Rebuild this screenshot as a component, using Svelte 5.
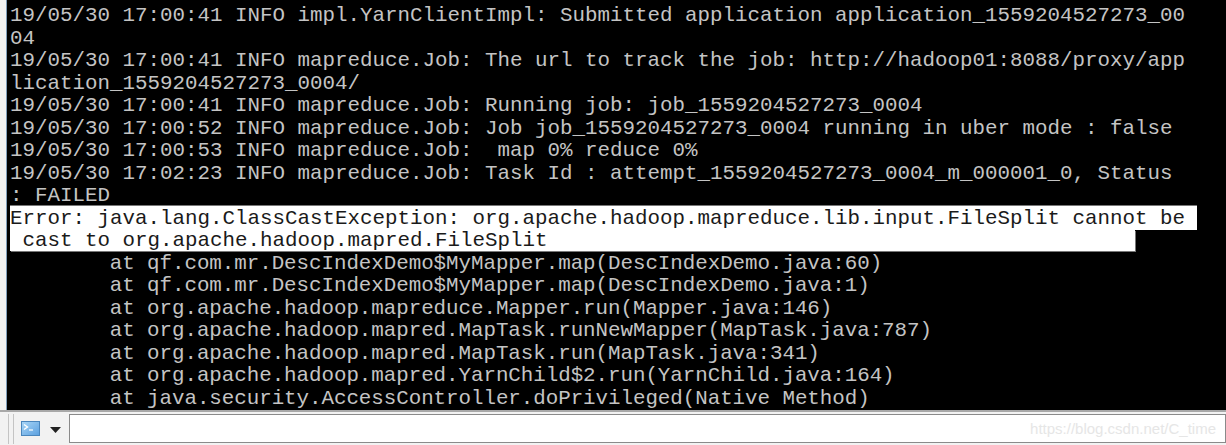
<script>
  const before = [
    "19/05/30 17:00:41 INFO impl.YarnClientImpl: Submitted application application_1559204527273_00",
    "04",
    "19/05/30 17:00:41 INFO mapreduce.Job: The url to track the job: http://hadoop01:8088/proxy/app",
    "lication_1559204527273_0004/",
    "19/05/30 17:00:41 INFO mapreduce.Job: Running job: job_1559204527273_0004",
    "19/05/30 17:00:52 INFO mapreduce.Job: Job job_1559204527273_0004 running in uber mode : false",
    "19/05/30 17:00:53 INFO mapreduce.Job:  map 0% reduce 0%",
    "19/05/30 17:02:23 INFO mapreduce.Job: Task Id : attempt_1559204527273_0004_m_000001_0, Status",
    ": FAILED"
  ];
  const selFirst = "Error: java.lang.ClassCastException: org.apache.hadoop.mapreduce.lib.input.FileSplit cannot be";
  const selSecond = " cast to org.apache.hadoop.mapred.FileSplit";
  const after = [
    "        at qf.com.mr.DescIndexDemo$MyMapper.map(DescIndexDemo.java:60)",
    "        at qf.com.mr.DescIndexDemo$MyMapper.map(DescIndexDemo.java:1)",
    "        at org.apache.hadoop.mapreduce.Mapper.run(Mapper.java:146)",
    "        at org.apache.hadoop.mapred.MapTask.runNewMapper(MapTask.java:787)",
    "        at org.apache.hadoop.mapred.MapTask.run(MapTask.java:341)",
    "        at org.apache.hadoop.mapred.YarnChild$2.run(YarnChild.java:164)",
    "        at java.security.AccessController.doPrivileged(Native Method)"
  ];
</script>

<div class="window">
  <div class="terminal">
    {#each before as l}
      <div class="line">{l}</div>
    {/each}
    <div class="line sel first">{selFirst}</div>
    <div class="line sel second">{selSecond}</div>
    {#each after as l}
      <div class="line stack">{l}</div>
    {/each}
  </div>
  <div class="bar">
    <div class="grip"></div>
    <svg class="icon" width="19" height="15" viewBox="0 0 19 15">
      <defs>
        <linearGradient id="ic" x1="0" y1="0" x2="1" y2="1">
          <stop offset="0" stop-color="#a9d6f7"/>
          <stop offset="1" stop-color="#5a9fdf"/>
        </linearGradient>
      </defs>
      <rect x=".5" y=".5" width="18" height="14" fill="url(#ic)" stroke="#4a86bd"/>
      <path d="M3 3.500l3.500 2.500L3 8.500" fill="none" stroke="#fff" stroke-width="1.400"/>
      <path d="M8 9h4" stroke="#fff" stroke-width="1.200"/>
    </svg>
    <svg class="caret" width="11" height="6" viewBox="0 0 11 6"><path d="M0 0h11L5.500 6z" fill="#222"/></svg>
    <div class="input"><span class="mark">https://blog.csdn.net/C_time</span></div>
  </div>
</div>

<style>
  :global(body) { margin: 0; background: #fff; }
  .window {
    width: 1226px;
    height: 445px;
    display: flex;
    flex-direction: column;
    overflow: hidden;
    background: #f2f2f2;
  }
  .terminal {
    height: 410px;
    flex: none;
    margin-left: 6px;
    box-sizing: border-box;
    padding: 5px 0 0 3px;
    background: #000;
    border-left: 1px solid #7f9db9;
    overflow: hidden;
    font-family: "Liberation Mono", "Courier New", monospace;
    font-size: 20.83px;
    line-height: 22.5px;
    color: #c4c4c4;
  }
  .line { height: 22.5px; white-space: pre; }
  .stack { letter-spacing: -0.04px; }
  .sel { background: #fff; color: #1a1a1a; }
  .first {
    width: 1187px;
    margin-top: -2px;
    padding-top: 2px;
    box-shadow: 0 -1px #777;
  }
  .second {
    width: 1125px;
    height: 20.5px;
    margin-bottom: 2px;
    box-shadow: 1px 1px #777;
  }
  .bar {
    flex: 1;
    display: flex;
    align-items: center;
    border-top: 2px solid #a8a8a8;
    padding-left: 8px;
  }
  .grip {
    width: 4px;
    height: 30px;
    border-left: 1px solid #c4c4c4;
    border-right: 1px solid #c4c4c4;
  }
  .icon { margin-left: 7px; }
  .caret { margin-left: 10px; margin-top: 2px; }
  .input {
    flex: 1;
    height: 27px;
    margin-left: 8px;
    border: 1px solid #8a8a8a;
    background: #fff;
    display: flex;
    align-items: center;
    justify-content: flex-end;
    padding-right: 9px;
  }
  .mark {
    font-family: "Liberation Sans", Arial, sans-serif;
    font-size: 15px;
    color: #e6e6e6;
  }
</style>
